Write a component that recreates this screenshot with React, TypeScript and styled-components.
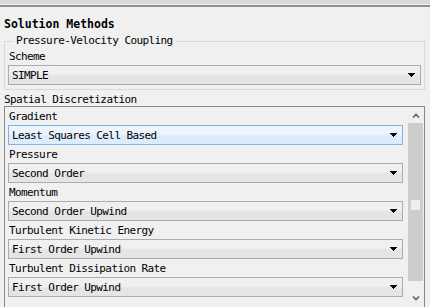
import styled, { createGlobalStyle } from 'styled-components';

const GlobalStyle = createGlobalStyle`
  html, body {
    margin: 0;
    padding: 0;
    background: #f0f0f0;
  }
  body {
    font-family: "DejaVu Sans Mono", "Liberation Mono", monospace;
    font-size: 11px;
    letter-spacing: -0.6px;
    color: #000;
  }
`;

// whole task page
const Page = styled.div`
  width: 430px;
  height: 307px;
  overflow: hidden;
`;

// edge of the tab strip above the page
const TabEdge = styled.div`
  height: 4px;
  background: #d9d9d9;
`;

const Rule = styled.div`
  height: 2px;
  margin-top: 1px;
  background: #8e8e8e;
`;

const Title = styled.div`
  margin-top: 8px;
  padding-left: 4px;
  line-height: 18px;
  font-size: 11.5px;
  font-weight: bold;
  letter-spacing: 0;
`;

// group box with etched border
const Group = styled.fieldset`
  margin: 2px 5px 0 4px;
  padding: 0 3px 4px;
  border: 1px solid #d9d9d9;
  min-width: 0;
`;

const GroupLegend = styled.legend`
  margin-left: 5px;
  padding: 0 3px;
  line-height: 12px;
`;

const FieldLabel = styled.div`
  box-sizing: border-box;
  height: 18px;
  padding: 2px 0 0 1px;
  line-height: 16px;
`;

const Combo = styled.div<{ $active?: boolean }>`
  display: flex;
  align-items: center;
  justify-content: space-between;
  box-sizing: border-box;
  height: 20px;
  padding: 0 5px 0 3px;
  border: 1px solid ${(p) => (p.$active ? '#7eb4ea' : '#acacac')};
  background: ${(p) =>
    p.$active
      ? 'linear-gradient(#ecf4fc 0%, #ecf4fc 45%, #dcecfc 55%, #dcecfc 100%)'
      : 'linear-gradient(#f0f0f0 0%, #f0f0f0 45%, #e5e5e5 55%, #e5e5e5 100%)'};
`;

const ComboText = styled.span`
  white-space: nowrap;
`;

const SectionLabel = styled.div`
  margin-top: 4px;
  padding-left: 4px;
  line-height: 12px;
`;

// scrolling panel with the discretization fields
const Panel = styled.div`
  display: flex;
  height: 215px;
  margin: 0 5px 0 4px;
  border: 1px solid #868a8f;
`;

const PanelBody = styled.div`
  flex: 1;
  padding: 0 3px;
`;

const ScrollBar = styled.div`
  display: flex;
  flex-direction: column;
  width: 17px;
  margin-left: 1px;
`;

const ScrollButton = styled.div`
  display: flex;
  align-items: center;
  justify-content: center;
  flex-shrink: 0;
  height: 16px;
`;

const ScrollTrack = styled.div`
  display: flex;
  justify-content: center;
  flex-shrink: 0;
  height: 167px;
`;

const ScrollThumb = styled.div`
  display: flex;
  align-items: center;
  justify-content: center;
  width: 15px;
  height: 158px;
  background: #cdcdcd;
`;

const Grip = styled.div`
  width: 9px;
  height: 10px;
  margin-top: 6px;
  background: #eeeeee;
`;

function Arrow() {
  return (
    <svg width="7" height="4" viewBox="0 0 7 4">
      <path d="M0 0H7V1H6V2H5V3H4V4H3V3H2V2H1V1H0Z" fill="#000" />
    </svg>
  );
}

function Chevron({ up }: { up?: boolean }) {
  return (
    <svg width="8" height="5" viewBox="0 0 8 5">
      <path
        d={up ? 'M1 4.5L4 1.5L7 4.5' : 'M1 0.5L4 3.5L7 0.5'}
        fill="none"
        stroke="#606060"
        strokeWidth="1.6"
      />
    </svg>
  );
}

type Field = { label: string; value: string; active?: boolean };

const fields: Field[] = [
  { label: 'Gradient', value: 'Least Squares Cell Based', active: true },
  { label: 'Pressure', value: 'Second Order' },
  { label: 'Momentum', value: 'Second Order Upwind' },
  { label: 'Turbulent Kinetic Energy', value: 'First Order Upwind' },
  { label: 'Turbulent Dissipation Rate', value: 'First Order Upwind' },
];

export default function App() {
  return (
    <Page>
      <GlobalStyle />
      <TabEdge />
      <Rule />
      <Title>Solution Methods</Title>
      <Group>
        <GroupLegend>Pressure-Velocity Coupling</GroupLegend>
        <FieldLabel>Scheme</FieldLabel>
        <Combo>
          <ComboText>SIMPLE</ComboText>
          <Arrow />
        </Combo>
      </Group>
      <SectionLabel>Spatial Discretization</SectionLabel>
      <Panel>
        <PanelBody>
          {fields.map((f) => (
            <div key={f.label}>
              <FieldLabel>{f.label}</FieldLabel>
              <Combo $active={f.active}>
                <ComboText>{f.value}</ComboText>
                <Arrow />
              </Combo>
            </div>
          ))}
        </PanelBody>
        <ScrollBar>
          <ScrollButton>
            <Chevron up />
          </ScrollButton>
          <ScrollTrack>
            <ScrollThumb>
              <Grip />
            </ScrollThumb>
          </ScrollTrack>
          <ScrollButton>
            <Chevron />
          </ScrollButton>
        </ScrollBar>
      </Panel>
    </Page>
  );
}
